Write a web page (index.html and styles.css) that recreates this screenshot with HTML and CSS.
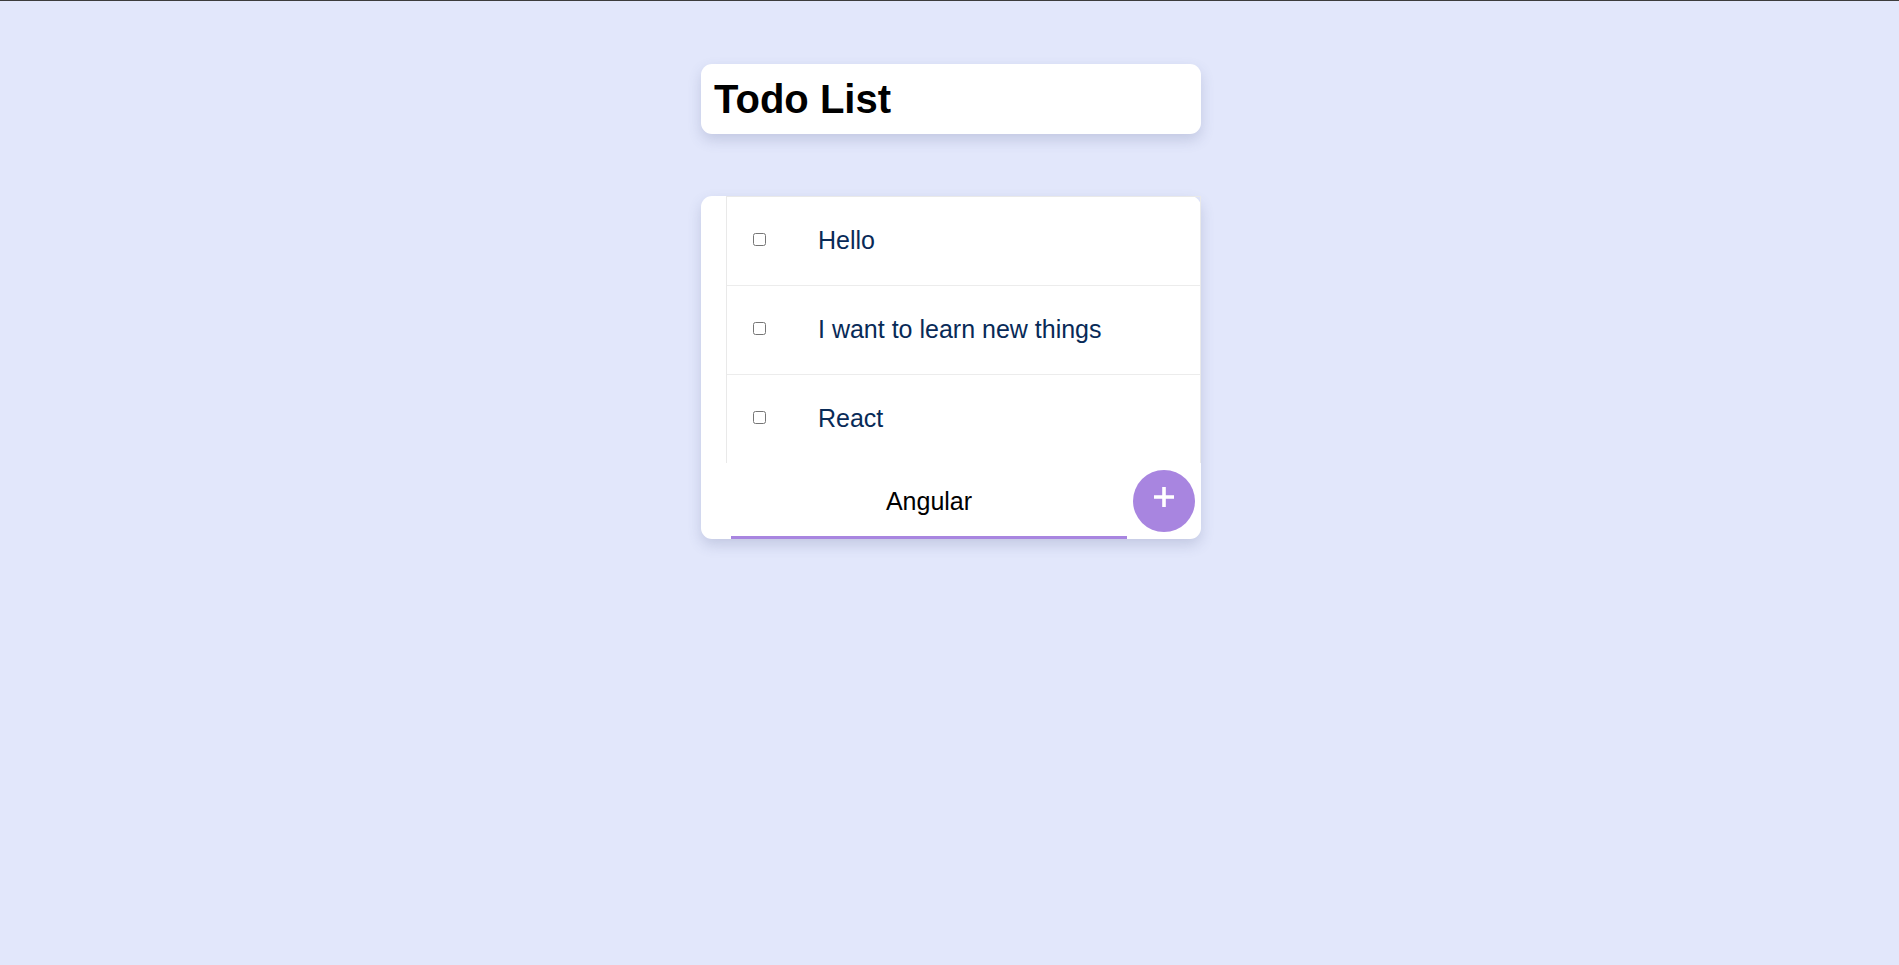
FILE: index.html
```html
<!DOCTYPE html>
<html lang="en">
<head>
<meta charset="utf-8">
<title>Todo List</title>
<link rel="stylesheet" href="styles.css">
</head>
<body>
<main class="app">
  <header class="title-card">
    <h1 class="title">Todo List</h1>
  </header>
  <section class="todo-card">
    <ul class="todo-list">
      <li class="todo-item"><input type="checkbox" class="todo-check"><span class="todo-text">Hello</span></li>
      <li class="todo-item"><input type="checkbox" class="todo-check"><span class="todo-text">I want to learn new things</span></li>
      <li class="todo-item"><input type="checkbox" class="todo-check"><span class="todo-text">React</span></li>
    </ul>
    <form class="todo-form" onsubmit="return false">
      <input class="todo-input" type="text" value="Angular" autofocus>
      <button class="add-btn" type="submit" aria-label="Add">
        <svg class="add-icon" width="20" height="20" viewBox="0 0 20 20"><path d="M10 0V20M0 10H20" stroke="#fff" stroke-width="3.6" fill="none"/></svg>
      </button>
    </form>
  </section>
</main>
</body>
</html>
```

FILE: styles.css
```css
html, body {
  margin: 0;
  padding: 0;
}
body {
  background: #e2e7fb;
  border-top: 1px solid #3c3c3c;
  min-height: 964px;
  font-family: "Liberation Sans", Arial, sans-serif;
}
.app {
  display: flex;
  flex-direction: column;
  align-items: center;
  padding: 63px 0 0 3px;
}
.title-card {
  width: 500px;
  height: 70px;
  box-sizing: border-box;
  background: #fff;
  border-radius: 11px;
  box-shadow: 0 6px 14px rgba(70, 80, 130, 0.2);
  display: flex;
  align-items: center;
  padding: 0 13px;
}
.title {
  margin: 0;
  font-size: 40px;
  font-weight: 700;
  color: #000;
  line-height: 1;
}
.todo-card {
  margin-top: 62px;
  width: 500px;
  background: #fff;
  border-radius: 11px;
  box-shadow: 0 6px 14px rgba(70, 80, 130, 0.2);
}
.todo-list {
  list-style: none;
  margin: 0 0 0 25px;
  padding: 0;
  border: 1px solid #e9e9e9;
  border-bottom: none;
}
.todo-item {
  height: 89px;
  box-sizing: border-box;
  display: flex;
  align-items: center;
  padding: 0 0 2px 26px;
  border-bottom: 1px solid #ececec;
}
.todo-item:last-child {
  height: 88px;
  border-bottom: none;
}
.todo-check {
  width: 13px;
  height: 13px;
  margin: 0 0 1px 0;
}
.todo-text {
  margin-left: 52px;
  font-size: 25px;
  color: #082a57;
}
.todo-form {
  display: flex;
  align-items: center;
  height: 76px;
  margin: 0;
}
.todo-input {
  margin-left: 30px;
  width: 396px;
  height: 76px;
  box-sizing: border-box;
  border: none;
  border-bottom: 3px solid #a885e0;
  outline: none;
  text-align: center;
  font-family: "Liberation Sans", Arial, sans-serif;
  font-size: 25px;
  color: #000;
  padding: 3px 0 0 0;
  background: transparent;
  caret-color: #000;
}
.add-btn {
  margin-left: 6px;
  width: 62px;
  height: 62px;
  border-radius: 50%;
  border: none;
  background: #a885e0;
  display: flex;
  align-items: center;
  justify-content: center;
  padding: 0 0 8px 0;
  cursor: pointer;
}
.add-icon {
  display: block;
}
```
